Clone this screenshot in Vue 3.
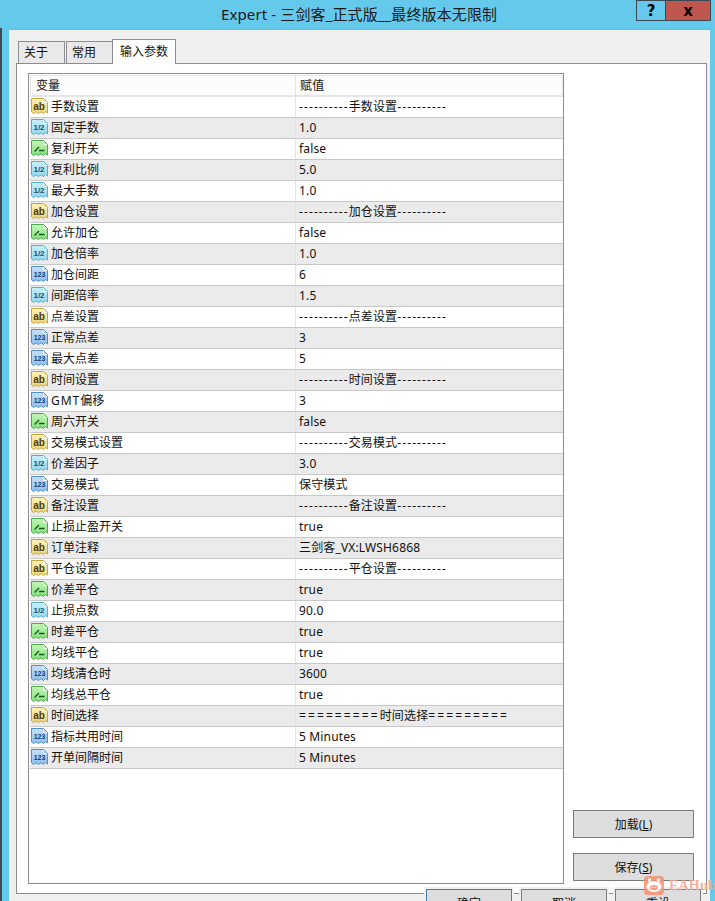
<script setup>
const sep = (s) => `----------${s}----------`
const rows = [
  ['ab', '手数设置', sep('手数设置')],
  ['half', '固定手数', '1.0'],
  ['bool', '复利开关', 'false'],
  ['half', '复利比例', '5.0'],
  ['half', '最大手数', '1.0'],
  ['ab', '加仓设置', sep('加仓设置')],
  ['bool', '允许加仓', 'false'],
  ['half', '加仓倍率', '1.0'],
  ['num', '加仓间距', '6'],
  ['half', '间距倍率', '1.5'],
  ['ab', '点差设置', sep('点差设置')],
  ['num', '正常点差', '3'],
  ['num', '最大点差', '5'],
  ['ab', '时间设置', sep('时间设置')],
  ['num', 'GMT偏移', '3'],
  ['bool', '周六开关', 'false'],
  ['ab', '交易模式设置', sep('交易模式')],
  ['half', '价差因子', '3.0'],
  ['num', '交易模式', '保守模式'],
  ['ab', '备注设置', sep('备注设置')],
  ['bool', '止损止盈开关', 'true'],
  ['ab', '订单注释', '三剑客_VX:LWSH6868'],
  ['ab', '平仓设置', sep('平仓设置')],
  ['bool', '价差平仓', 'true'],
  ['half', '止损点数', '90.0'],
  ['bool', '时差平仓', 'true'],
  ['bool', '均线平仓', 'true'],
  ['num', '均线清仓时', '3600'],
  ['bool', '均线总平仓', 'true'],
  ['ab', '时间选择', '=========时间选择========='],
  ['num', '指标共用时间', '5 Minutes'],
  ['num', '开单间隔时间', '5 Minutes'],
].map(([type, name, value]) => ({
  type,
  name,
  latin: (name.match(/^[A-Za-z]+/) || [''])[0],
  rest: name.replace(/^[A-Za-z]+/, ''),
  parts: value.split(/([-=]{3,})/).filter(Boolean),
}))
const partClass = (p) => (p[0] === '-' ? 'dash' : p[0] === '=' ? 'equal' : '')
</script>

<template>
  <div class="window">
    <svg class="defs" width="0" height="0">
      <defs>
        <linearGradient id="g-ab" x1="0" y1="0" x2="0" y2="1"><stop offset="0" stop-color="#fbf0b8" /><stop offset="1" stop-color="#eed77a" /></linearGradient>
        <linearGradient id="g-half" x1="0" y1="0" x2="0" y2="1"><stop offset="0" stop-color="#c8eef8" /><stop offset="1" stop-color="#94d8ee" /></linearGradient>
        <linearGradient id="g-num" x1="0" y1="0" x2="0" y2="1"><stop offset="0" stop-color="#c6e0f6" /><stop offset="1" stop-color="#8fc0ec" /></linearGradient>
        <linearGradient id="g-bool" x1="0" y1="0" x2="0" y2="1"><stop offset="0" stop-color="#c4f5b8" /><stop offset="1" stop-color="#86e27e" /></linearGradient>
      </defs>
    </svg>
    <header class="titlebar">
      <span class="title">Expert - 三剑客_正式版__最终版本无限制</span>
      <div class="caption">
        <span class="cap help">?</span>
        <span class="cap close">x</span>
      </div>
    </header>
    <main class="client">
      <nav class="tabs">
        <span class="tab">关于</span>
        <span class="tab">常用</span>
        <span class="tab active">输入参数</span>
      </nav>
      <section class="panel">
        <div class="list">
          <div class="row head">
            <span class="c1 hname">变量</span>
            <span class="c2">赋值</span>
          </div>
          <div v-for="(r, i) in rows" :key="i" class="row" :class="{ odd: i % 2 === 1 }">
            <span class="c1">
              <svg class="ico" :class="r.type" width="17" height="17" viewBox="0 0 17 17">
                <path class="doc" d="M0.500 0.500H12.500L16.500 4.500V15L14.500 13.500L12.500 15.500L10 13.800L7.500 15.500L5 13.800L2.500 15.500L0.500 13.800Z" />
                <path class="fold" d="M12.500 1V4.500H16" />
                <path v-if="r.type === 'bool'" class="glyph" d="M3.500 11.500L8 7M8 10.500H13.500" />
                <text v-else-if="r.type === 'num'" x="8.500" y="11" text-anchor="middle" font-size="7">123</text>
                <text v-else-if="r.type === 'half'" x="8" y="11" text-anchor="middle" font-size="8">1/2</text>
                <text v-else x="8" y="11.500" text-anchor="middle" font-size="10">ab</text>
              </svg>
              <span class="name"><span v-if="r.latin" class="latin">{{ r.latin }}</span>{{ r.rest }}</span>
            </span>
            <span class="c2"><span v-for="(p, k) in r.parts" :key="k" :class="partClass(p)">{{ p }}</span></span>
          </div>
        </div>
        <aside class="side">
          <button class="btn side-btn">加载(<u>L</u>)</button>
          <button class="btn side-btn">保存(<u>S</u>)</button>
        </aside>
      </section>
      <footer class="actions">
        <button class="btn act primary">确定</button>
        <button class="btn act">取消</button>
        <button class="btn act">重设</button>
      </footer>
    </main>
    <div class="mark">
      <svg width="20" height="19" viewBox="0 0 20 19">
        <rect x="0" y="0" width="20" height="19" rx="4" fill="#f8906c" />
        <circle cx="5.500" cy="4" r="1.800" fill="#fff" />
        <circle cx="14.500" cy="4" r="1.800" fill="#fff" />
        <ellipse cx="10" cy="10.500" rx="7.500" ry="5.500" fill="#fff" />
        <ellipse cx="10" cy="11.500" rx="4" ry="2.500" fill="#f8906c" />
        <circle cx="8.500" cy="11.500" r="0.800" fill="#fff" />
        <circle cx="11.500" cy="11.500" r="0.800" fill="#fff" />
      </svg>
      <span class="mark-text">EAHub</span>
    </div>
  </div>
</template>

<style>
html, body { margin: 0; overflow: hidden; background: #65c9ec; }
</style>

<style scoped>
.window {
  position: relative;
  width: 715px;
  height: 901px;
  overflow: hidden;
  display: flex;
  flex-direction: column;
  background: linear-gradient(#3c4a52, #3c4a52) 0 28px / 2px 100% no-repeat, #65c9ec;
  font: 12px "Noto Sans", "Noto Sans CJK SC", sans-serif;
  color: #111;
}
.defs { position: absolute; }
.titlebar {
  height: 29px;
  flex: none;
  display: flex;
  justify-content: space-between;
  padding-left: 221px;
  padding-right: 4px;
  box-sizing: border-box;
}
.title { font-size: 15px; line-height: 29px; letter-spacing: 0.12px; color: #1a1a1a; }
.caption { display: flex; height: 21px; }
.cap {
  display: flex;
  align-items: center;
  justify-content: center;
  box-sizing: border-box;
  border: 1px solid #3b4a52;
  font: bold 15px/18px "DejaVu Sans", sans-serif;
  color: #000;
}
.help { width: 29px; border-right: 0; }
.close { width: 46px; background: #c0574f; }
.client {
  margin-left: 9px;
  width: 701px;
  flex: 1;
  box-sizing: border-box;
  border-top: 1px solid #a6aab0;
  background: #f0f0f0;
  padding: 9px 3px 0 7px;
  display: flex;
  flex-direction: column;
}
.tabs { display: flex; height: 24px; padding-left: 2px; gap: 1px; align-items: flex-end; position: relative; z-index: 1; }
.tab {
  height: 22px;
  box-sizing: border-box;
  width: 47px;
  border: 1px solid #8c8c92;
  border-bottom: 0;
  background: #e9e9e9;
  padding-left: 5px;
  line-height: 21px;
}
.tab.active {
  width: 64px;
  height: 25px;
  margin-bottom: -1px;
  margin-left: -2px;
  background: #fff;
  padding-left: 7px;
  line-height: 24px;
}
.panel {
  height: 831px;
  flex: none;
  box-sizing: border-box;
  border: 1px solid #8c8c92;
  background: #fff;
  padding: 9px 12px 9px 11px;
  display: flex;
  gap: 9px;
}
.list {
  width: 536px;
  flex: none;
  box-sizing: border-box;
  border: 1px solid #8c8c92;
  padding: 1px 0 0 1px;
}
.row {
  height: 21px;
  box-sizing: border-box;
  display: flex;
  border-bottom: 1px solid #c9c9c9;
  line-height: 20px;
  white-space: nowrap;
}
.row.odd { background: #ebebeb; }
.row.head {
  background: #fcfcfc;
  border: 1px solid #e6e6e6;
  border-bottom-width: 2px;
  height: 22px;
}
.c1 {
  width: 266px;
  flex: none;
  display: flex;
  align-items: center;
  box-sizing: border-box;
  padding-left: 1px;
  border-right: 1px solid #e4e4e4;
}
.c2 { padding-left: 3px; letter-spacing: 0.15px; }
.head .c1 { width: 265px; }
.hname { padding-left: 5px; }
.head .c2 { padding-left: 4px; }
.dash { letter-spacing: 1.1px; }
.equal { letter-spacing: 2.1px; }
.ico { flex: none; margin-top: -1px; }
.name { margin-left: 3px; }
.latin { letter-spacing: 1px; }
.doc { stroke-width: 1; }
.fold { fill: none; stroke: #fff; stroke-opacity: 0.8; }
.ico text { font-family: "Liberation Sans", sans-serif; font-weight: 700; }
.ab .doc { fill: url(#g-ab); stroke: #c4a540; }
.ab text { fill: #4b3c12; }
.half .doc { fill: url(#g-half); stroke: #58aecd; }
.half text { fill: #14536f; }
.num .doc { fill: url(#g-num); stroke: #4f90c9; }
.num text { fill: #123c74; }
.bool .doc { fill: url(#g-bool); stroke: #4caa4c; }
.glyph { fill: none; stroke: #14561c; stroke-width: 1.300; }
.side {
  width: 121px;
  display: flex;
  flex-direction: column;
  justify-content: flex-end;
  gap: 15px;
  padding-bottom: 3px;
}
.btn {
  box-sizing: border-box;
  border: 1px solid #7a7a7a;
  background: #dddddd;
  padding: 0;
  font: inherit;
  color: #111;
}
.side-btn { height: 28px; }
.actions {
  display: flex;
  gap: 9px;
  margin-top: -5px;
  padding-left: 410px;
  position: relative;
}
.act { width: 86px; height: 28px; flex: none; outline: 2px solid #f0f0f0; }
.act:last-child { margin-left: -1px; }
.primary { border-color: #3c7fb1; }
.mark {
  position: absolute;
  left: 644px;
  top: 876px;
  display: flex;
  align-items: center;
  gap: 5px;
  opacity: 0.85;
}
.mark-text { font: bold 14px "Liberation Serif", serif; letter-spacing: 0.2px; color: #f9a48e; }
</style>
